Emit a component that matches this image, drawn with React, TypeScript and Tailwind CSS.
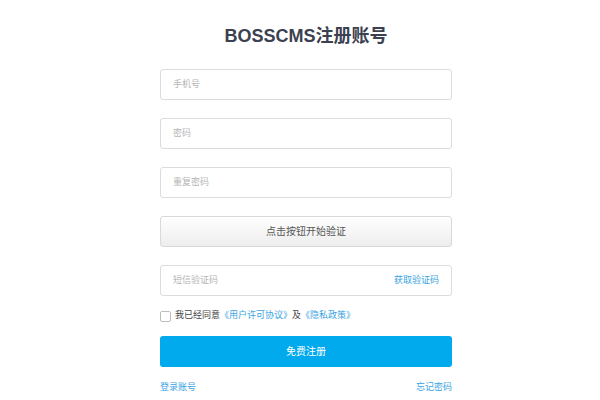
import React from "react";

const font = { fontFamily: '"Liberation Sans", Arial, "Noto Sans CJK SC", sans-serif' };

export default function App() {
  return (
    <div className="w-[600px] h-[400px] bg-white overflow-hidden" style={font}>
      <div className="ml-[160px] w-[292px] pt-[23px] flex flex-col">
        <h1 className="text-center text-[18px] leading-[27px] font-bold text-[#3b4150]">
          BOSSCMS注册账号
        </h1>
        <div className="mt-[19px] flex flex-col gap-[18px]">
          <div className="h-[31px] border border-[#dcdcdc] rounded-[3px] flex items-center px-[12px] text-[9px] text-[#b5b5b5]">
            手机号
          </div>
          <div className="h-[31px] border border-[#dcdcdc] rounded-[3px] flex items-center px-[12px] text-[9px] text-[#b5b5b5]">
            密码
          </div>
          <div className="h-[31px] border border-[#dcdcdc] rounded-[3px] flex items-center px-[12px] text-[9px] text-[#b5b5b5]">
            重复密码
          </div>
          <div className="h-[31px] border border-[#d9d9d9] rounded-[3px] flex items-center justify-center text-[10px] text-[#555] bg-gradient-to-b from-[#ffffff] to-[#ededed]">
            点击按钮开始验证
          </div>
          <div className="h-[31px] border border-[#dcdcdc] rounded-[3px] flex items-center justify-between px-[12px] text-[9px]">
            <span className="text-[#b5b5b5]">短信验证码</span>
            <span className="text-[#3aa3e3]">获取验证码</span>
          </div>
        </div>
        <div className="mt-[14px] h-[12px] flex items-center text-[9px] text-[#444]">
          <span className="w-[11px] h-[11px] border border-[#bdbdbd] rounded-[2px] bg-white mr-[4px]" />
          <span>我已经同意</span>
          <span className="text-[#3aa3e3]">《用户许可协议》</span>
          <span>及</span>
          <span className="text-[#3aa3e3]">《隐私政策》</span>
        </div>
        <div className="mt-[14px] h-[31px] rounded-[3px] bg-[#01a9ed] flex items-center justify-center text-white text-[10px]">
          免费注册
        </div>
        <div className="mt-[14px] flex justify-between text-[9px] text-[#3aa3e3]">
          <span>登录账号</span>
          <span>忘记密码</span>
        </div>
      </div>
    </div>
  );
}
